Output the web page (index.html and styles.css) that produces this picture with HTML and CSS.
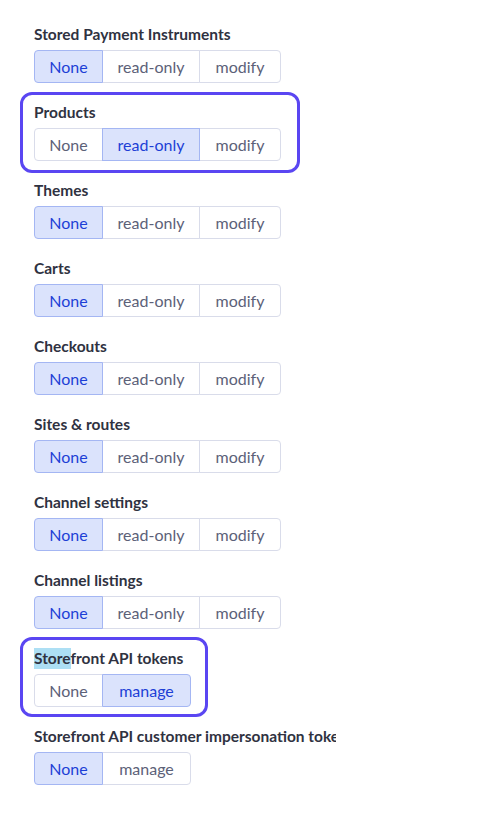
FILE: index.html
```html
<!DOCTYPE html>
<html lang="en">
<head>
<meta charset="utf-8">
<title>Permissions</title>
<link rel="stylesheet" href="styles.css">
</head>
<body>
<div class="list">
  <div class="perm">
    <div class="label">Stored Payment Instruments</div>
    <div class="seg"><span class="opt none on">None</span><span class="opt ro">read-only</span><span class="opt mod">modify</span></div>
  </div>
  <div class="perm marked">
    <div class="label">Products</div>
    <div class="seg"><span class="opt none">None</span><span class="opt ro on">read-only</span><span class="opt mod">modify</span></div>
  </div>
  <div class="perm">
    <div class="label">Themes</div>
    <div class="seg"><span class="opt none on">None</span><span class="opt ro">read-only</span><span class="opt mod">modify</span></div>
  </div>
  <div class="perm">
    <div class="label">Carts</div>
    <div class="seg"><span class="opt none on">None</span><span class="opt ro">read-only</span><span class="opt mod">modify</span></div>
  </div>
  <div class="perm">
    <div class="label">Checkouts</div>
    <div class="seg"><span class="opt none on">None</span><span class="opt ro">read-only</span><span class="opt mod">modify</span></div>
  </div>
  <div class="perm">
    <div class="label">Sites &amp; routes</div>
    <div class="seg"><span class="opt none on">None</span><span class="opt ro">read-only</span><span class="opt mod">modify</span></div>
  </div>
  <div class="perm">
    <div class="label">Channel settings</div>
    <div class="seg"><span class="opt none on">None</span><span class="opt ro">read-only</span><span class="opt mod">modify</span></div>
  </div>
  <div class="perm">
    <div class="label">Channel listings</div>
    <div class="seg"><span class="opt none on">None</span><span class="opt ro">read-only</span><span class="opt mod">modify</span></div>
  </div>
  <div class="perm marked marked-small">
    <div class="label"><span class="hl">Store</span>front API tokens</div>
    <div class="seg"><span class="opt none">None</span><span class="opt man on">manage</span></div>
  </div>
  <div class="perm">
    <div class="label">Storefront API customer impersonation tokens</div>
    <div class="seg"><span class="opt none on">None</span><span class="opt man">manage</span></div>
  </div>
</div>
</body>
</html>
```
FILE: styles.css
```css
html, body {
  margin: 0;
  padding: 0;
  background: #ffffff;
}
body {
  font-family: "Lato", "Liberation Sans", sans-serif;
  color: #2f3241;
}
.list {
  width: 302px;
  padding: 24px 0 0 34px;
  overflow: hidden;
  white-space: nowrap;
}
.perm {
  position: relative;
  display: flex;
  flex-direction: column;
  align-items: flex-start;
  width: max-content;
  margin-bottom: 19px;
}
.label {
  font-size: 15.5px;
  font-weight: 700;
  line-height: 20px;
  margin-bottom: 6px;
}
.hl {
  background: #addff4;
  padding: 1px 0 2px;
}
.seg {
  display: flex;
}
.opt {
  box-sizing: border-box;
  height: 33px;
  padding: 0;
  display: flex;
  align-items: center;
  justify-content: center;
  font-size: 16px;
  color: #5c6178;
  border: 1px solid #d9dcea;
  margin-left: -1px;
  background: #ffffff;
}
.opt.none { width: 69px; }
.opt.ro { width: 98px; }
.opt.mod { width: 82px; }
.opt.man { width: 89px; }
.opt:first-child {
  margin-left: 0;
  border-radius: 4px 0 0 4px;
}
.opt:last-child {
  border-radius: 0 4px 4px 0;
}
.opt.on {
  position: relative;
  z-index: 1;
  background: #dbe3fc;
  border-color: #a4b6f3;
  color: #1d3fd6;
}
.marked::after {
  content: "";
  position: absolute;
  top: -10px;
  left: -14px;
  right: -19px;
  bottom: -12px;
  border: 3px solid #5a46f2;
  border-radius: 12px;
  pointer-events: none;
}
.marked-small::after {
  top: -11px;
  right: -17px;
  bottom: -10px;
}
```
